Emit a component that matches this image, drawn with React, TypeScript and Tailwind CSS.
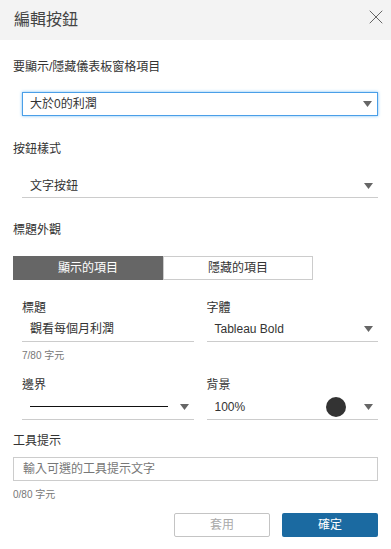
import { X } from 'lucide-react';

const font = { fontFamily: '"Liberation Sans", "Noto Sans CJK TC", sans-serif' };

function Caret() {
  return (
    <svg width="9" height="6" viewBox="0 0 9 6" className="shrink-0">
      <path d="M0 0h9L4.5 6z" fill="#666" />
    </svg>
  );
}

export default function App() {
  return (
    <div className="w-[391px] h-[549px] bg-white text-[#333] overflow-hidden" style={font}>
      {/* Header */}
      <div className="h-[40px] bg-[#f3f3f3] flex items-center justify-between pl-[14px] pr-[3px]">
        <span className="text-[16px] text-[#444]">編輯按鈕</span>
        <X size={24} strokeWidth={0.9} className="text-[#555] -mt-[6px]" />
      </div>

      <div className="px-[13px]">
        <div className="mt-[18px] h-[18px] leading-[18px] text-[12px]">要顯示/隱藏儀表板窗格項目</div>

        <div className="mt-[16px] ml-[9px] h-[24px] border border-[#4a9fe8] shadow-[0_0_3px_#7cc0f5] flex items-center justify-between pl-[7px] pr-[5px] text-[12px]">
          <span>大於0的利潤</span>
          <Caret />
        </div>

        <div className="mt-[24px] h-[18px] leading-[18px] text-[12px]">按鈕樣式</div>

        <div className="mt-[16px] ml-[9px] h-[24px] border-b border-[#ccc] flex items-center justify-between pl-[8px] pr-[5px] text-[12px]">
          <span>文字按鈕</span>
          <Caret />
        </div>

        <div className="mt-[23px] h-[18px] leading-[18px] text-[12px]">標題外觀</div>

        <div className="mt-[17px] flex w-[300px] h-[24px] text-[12px]">
          <div className="w-[150px] bg-[#666] text-white flex items-center justify-center">顯示的項目</div>
          <div className="w-[150px] border border-[#ccc] flex items-center justify-center">隱藏的項目</div>
        </div>

        <div className="ml-[9px] grid grid-cols-2 gap-x-[13px]">
          <div>
            <div className="mt-[19px] h-[18px] leading-[18px] text-[12px]">標題</div>
            <div className="h-[25px] border-b border-[#ccc] flex items-center pl-[8px] text-[12px]">觀看每個月利潤</div>
          </div>
          <div>
            <div className="mt-[19px] h-[18px] leading-[18px] text-[12px]">字體</div>
            <div className="h-[25px] border-b border-[#ccc] flex items-center justify-between pl-[8px] pr-[5px] text-[12px]">
              <span>Tableau Bold</span>
              <Caret />
            </div>
          </div>
        </div>

        <div className="ml-[9px] mt-[7px] h-[14px] leading-[14px] text-[10px] text-[#777]">7/80 字元</div>

        <div className="ml-[9px] grid grid-cols-2 gap-x-[13px]">
          <div>
            <div className="mt-[13px] h-[18px] leading-[18px] text-[12px]">邊界</div>
            <div className="h-[26px] border-b border-[#ccc] flex items-center pl-[8px] pr-[5px] gap-[12px]">
              <div className="w-[138px] h-px bg-[#111]" />
              <Caret />
            </div>
          </div>
          <div>
            <div className="mt-[13px] h-[18px] leading-[18px] text-[12px]">背景</div>
            <div className="h-[26px] border-b border-[#ccc] flex items-center pl-[8px] pr-[5px] text-[12px]">
              <span className="flex-1">100%</span>
              <div className="w-[20px] h-[20px] rounded-full bg-[#333] mr-[18px]" />
              <Caret />
            </div>
          </div>
        </div>

        <div className="mt-[12px] h-[18px] leading-[18px] text-[12px]">工具提示</div>

        <div className="mt-[7px] h-[24px] border border-[#ccc] flex items-center pl-[9px] text-[12px] text-[#777]">
          輸入可選的工具提示文字
        </div>

        <div className="mt-[7px] h-[14px] leading-[14px] text-[10px] text-[#777]">0/80 字元</div>

        <div className="mt-[11px] flex justify-end gap-[12px] text-[12px]">
          <button className="w-[96px] h-[24px] border border-[#c4c4c4] rounded-[2px] text-[#aaa] flex items-center justify-center">套用</button>
          <button className="w-[96px] h-[24px] bg-[#1b6aa1] rounded-[2px] text-white flex items-center justify-center">確定</button>
        </div>
      </div>
    </div>
  );
}
